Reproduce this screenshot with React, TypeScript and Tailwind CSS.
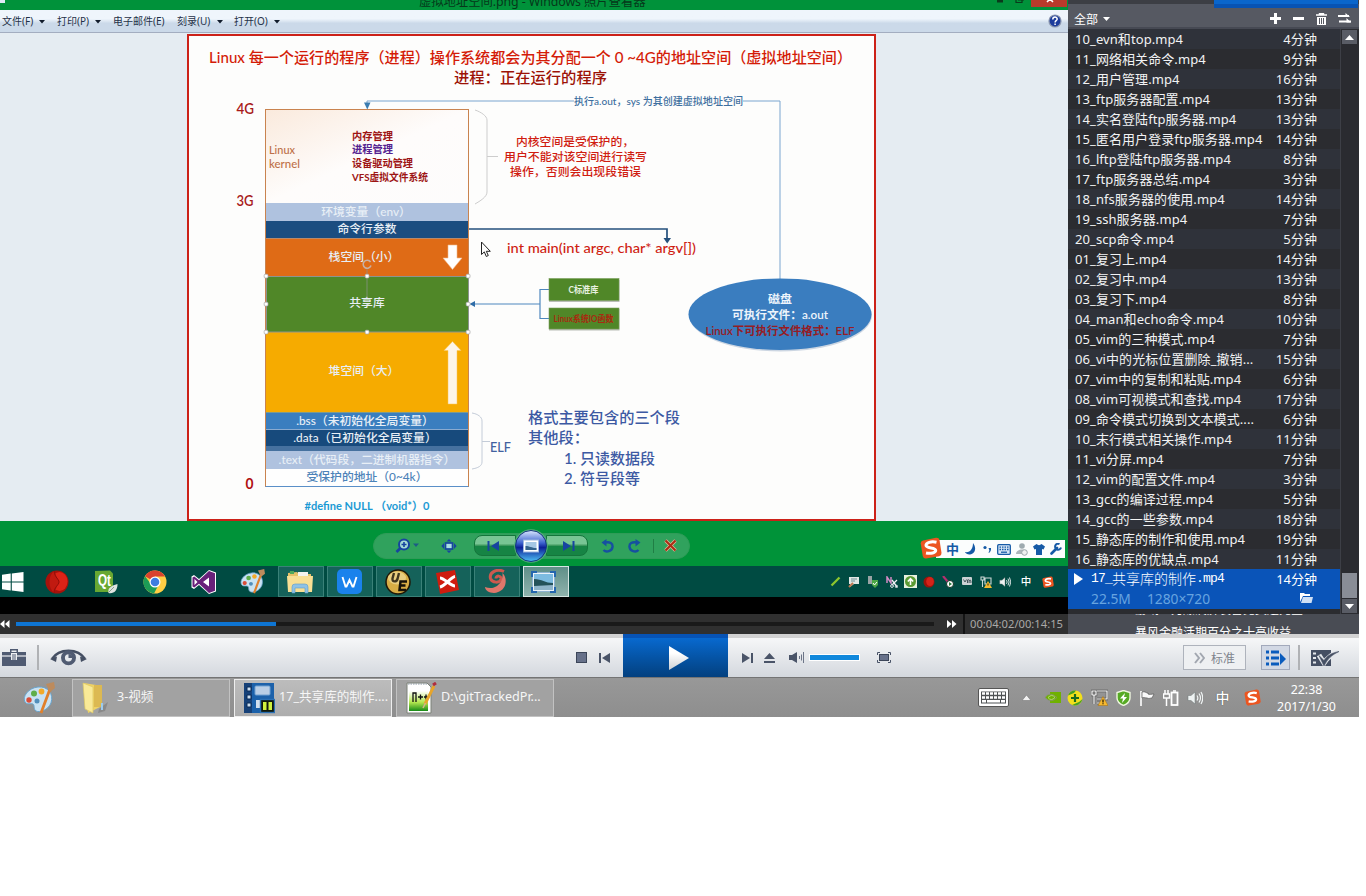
import React from "react";

type P = { children?: React.ReactNode };

const ui = "font-['Noto_Sans','Noto_Sans_CJK_SC',sans-serif]";

const playlist: [string, string][] = [
  ["10_evn和top.mp4", "4分钟"],
  ["11_网络相关命令.mp4", "9分钟"],
  ["12_用户管理.mp4", "16分钟"],
  ["13_ftp服务器配置.mp4", "13分钟"],
  ["14_实名登陆ftp服务器.mp4", "13分钟"],
  ["15_匿名用户登录ftp服务器.mp4", "14分钟"],
  ["16_lftp登陆ftp服务器.mp4", "8分钟"],
  ["17_ftp服务器总结.mp4", "3分钟"],
  ["18_nfs服务器的使用.mp4", "14分钟"],
  ["19_ssh服务器.mp4", "7分钟"],
  ["20_scp命令.mp4", "5分钟"],
  ["01_复习上.mp4", "14分钟"],
  ["02_复习中.mp4", "13分钟"],
  ["03_复习下.mp4", "8分钟"],
  ["04_man和echo命令.mp4", "10分钟"],
  ["05_vim的三种模式.mp4", "7分钟"],
  ["06_vi中的光标位置删除_撤销...", "15分钟"],
  ["07_vim中的复制和粘贴.mp4", "6分钟"],
  ["08_vim可视模式和查找.mp4", "17分钟"],
  ["09_命令模式切换到文本模式....", "6分钟"],
  ["10_末行模式相关操作.mp4", "11分钟"],
  ["11_vi分屏.mp4", "7分钟"],
  ["12_vim的配置文件.mp4", "3分钟"],
  ["13_gcc的编译过程.mp4", "5分钟"],
  ["14_gcc的一些参数.mp4", "18分钟"],
  ["15_静态库的制作和使用.mp4", "19分钟"],
  ["16_静态库的优缺点.mp4", "11分钟"],
];

/* ---------- photo viewer ---------- */

function ViewerTitle() {
  return (
    <div className="relative flex h-[10px] shrink-0 overflow-hidden bg-[#00923a]">
      <div className="h-[3px] w-[5px] bg-[#dfeaf5]" />
      <div className="ml-[414px] -mt-[8px] whitespace-nowrap text-[12.4px] leading-[19px] -tracking-[0.1px] text-[#06381a]">
        虚拟地址空间.png - Windows 照片查看器
      </div>
      <svg className="absolute right-[1px] top-0" width="76" height="8" viewBox="0 0 76 8">
        <rect x="6" y="0" width="6" height="2.5" fill="#0a3a1c" />
        <path d="M25 0v2.5h6v-3M27 0h6" fill="none" stroke="#0a3a1c" strokeWidth="1.2" />
        <rect x="40" width="36" height="7" fill="#b93a2b" />
        <path d="M56 2l3-3 3 3" stroke="#fff" strokeWidth="1.6" fill="none" />
      </svg>
    </div>
  );
}

function MenuCaret() {
  return (
    <svg width="6" height="4" viewBox="0 0 6 4">
      <path d="M0 0h6L3 3.6z" fill="#111c2c" />
    </svg>
  );
}

function ViewerMenu() {
  return (
    <div className="flex h-[23px] shrink-0 items-center border-b border-[#a3adc0] bg-linear-to-b from-[#eff5fc] from-40% to-[#cbd9e9] to-60% pl-[2px] pt-px text-[10px] text-[#1f3148]">
      <span className="w-[37px]">文件(F)</span>
      <MenuCaret />
      <span className="ml-[12px] w-[38px]">打印(P)</span>
      <MenuCaret />
      <span className="ml-[12px] w-[64px] whitespace-nowrap">电子邮件(E)</span>
      <span className="w-[40px]">刻录(U)</span>
      <MenuCaret />
      <span className="ml-[11px] w-[40px]">打开(O)</span>
      <MenuCaret />
      <svg className="ml-auto mr-[6px] -mt-px" width="14" height="14" viewBox="0 0 14 14">
        <circle cx="7" cy="7" r="6.6" fill="#8b97b0" />
        <circle cx="7" cy="7" r="5.4" fill="#1c3c9c" />
        <path d="M4.8 5.4c0-3 4.4-3 4.4-.3 0 1.6-2.1 1.5-2.1 3.3M7.1 9.6v1.3" stroke="#fff" strokeWidth="1.5" fill="none" />
      </svg>
    </div>
  );
}

type LabelProps = { x: number; y: number; w: number; s: number; c: string; b?: number; children: string };
function Label({ x, y, w, s, c, b = 500, children }: LabelProps) {
  return (
    <text x={x} y={y} textLength={w} lengthAdjust="spacingAndGlyphs" fontSize={s} fill={c} fontWeight={b} xmlSpace="preserve">
      {children}
    </text>
  );
}

function MemoryStack() {
  return (
    <div className="absolute left-[76px] top-[73px] flex w-[204px] flex-col border border-[#c9834f] border-b-[#5a8fc8] text-center text-[11.8px] font-medium text-[#e8eff6]">
      <div className="h-[93px] bg-linear-to-br from-[#faeadd] via-[#fefcfb] via-50% to-[#fdfcfc]" />
      <div className="h-[18px] bg-[#afc2df] pr-[2px] leading-[18px]">环境变量（env）</div>
      <div className="h-[17px] bg-[#1b4d80] leading-[16px]">命令行参数</div>
      <div className="h-[38px] border-t border-[#b8896b] bg-[#df6b16] pr-[6px] leading-[36px]">栈空间（小）</div>
      <div className="h-[56px] bg-[#508728] leading-[54px]">共享库</div>
      <div className="h-[80px] bg-[#f6ab00] pr-[6px] leading-[78px]">堆空间（大）</div>
      <div className="h-[17px] border-t border-[#7c9a90] bg-[#3a7ebf] pr-[4px] leading-[16px]">.bss（未初始化全局变量）</div>
      <div className="h-[17px] border-t border-[#8aabd0] bg-[#174a7c] pr-[4px] leading-[15px]">.data（已初始化全局变量）</div>
      <div className="h-[5px] bg-[#46719f]" />
      <div className="h-[18px] whitespace-nowrap bg-[#afc2df] leading-[18px]">.text（代码段，二进制机器指令）</div>
      <div className="h-[17px] bg-[#fefefe] leading-[16px] text-[#4c82b8]">受保护的地址（0~4k）</div>
    </div>
  );
}

function Diagram() {
  const handles: [number, number][] = [
    [266, 276], [367, 276], [468, 276], [266, 304], [468, 304], [266, 332], [367, 332], [468, 332],
  ];
  return (
    <div className="relative ml-[187px] h-[487px] w-[689px] overflow-hidden border-2 border-[#cc2118] bg-[#fdfdfc] font-['Lato','Noto_Sans_CJK_SC',sans-serif]">
      <MemoryStack />
      <svg className="absolute left-0 top-0" width="685" height="483" viewBox="189 36 685 483">
        <Label x={209} y={63} w={643} s={15.2} c="#d41c08">Linux 每一个运行的程序（进程）操作系统都会为其分配一个 0 ~4G的地址空间（虚拟地址空间）</Label>
        <Label x={454} y={83} w={153} s={15.2} c="#9c1206">进程：正在运行的程序</Label>
        <Label x={236.5} y={114} w={17.5} s={14.5} c="#a81a1a" b={600}>4G</Label>
        <Label x={236.5} y={206} w={17} s={14.5} c="#a81a1a" b={600}>3G</Label>
        <Label x={245.5} y={489} w={8} s={14.5} c="#b01010" b={700}>0</Label>

        <path d="M367 104v-3h207M743 101h37v178" fill="none" stroke="#7aa5cf" />
        <path d="M364 102.500h6.500l-3.200 7z" fill="#3b7cb0" />
        <Label x={574} y={104.500} w={169} s={10.3} c="#3d6f9f">执行a.out，sys 为其创建虚拟地址空间</Label>

        <Label x={269} y={153.500} w={26} s={10.5} c="#bd7048">Linux</Label>
        <Label x={269} y={167.500} w={31} s={10.5} c="#bd7048">kernel</Label>
        <Label x={352} y={139.500} w={41} s={10.3} c="#9d1414" b={700}>内存管理</Label>
        <Label x={352} y={153} w={41} s={10.3} c="#542290" b={700}>进程管理</Label>
        <Label x={352} y={167} w={61} s={10.3} c="#9d1414" b={700}>设备驱动管理</Label>
        <Label x={352} y={180.500} w={76} s={10.3} c="#9d1414" b={700}>VFS虚拟文件系统</Label>

        <path d="M475 110c6 2 12 6 12 10v72c0 5-7 9-12 12M487 156.500h11" fill="none" stroke="#cdcdcd" />
        <Label x={516} y={145.500} w={118} s={11.8} c="#d01c10">内核空间是受保护的，</Label>
        <Label x={504} y={160.500} w={143} s={11.8} c="#d01c10">用户不能对该空间进行读写</Label>
        <Label x={510} y={176} w={131} s={11.8} c="#d01c10">操作，否则会出现段错误</Label>

        <path d="M469 229h198v10" fill="none" stroke="#24507c" strokeWidth="1.7" />
        <path d="M663.500 238h7.500l-3.800 5.500z" fill="#24507c" />
        <Label x={507} y={253} w={189} s={14} c="#cf1d12">int main(int argc, char* argv[])</Label>
        <path d="M481.500 242v12.500l2.800-2.600 2 4.600 2-1-2-4.200h4z" fill="#fdfdfc" stroke="#222" strokeWidth="1" />

        <path d="M549 289.500h-9v29h9M540 304h-68" fill="none" stroke="#4e87bd" strokeWidth="1.2" />
        <path d="M469.500 304l5.500-3v6z" fill="#2f6da8" />
        <rect x="549" y="280" width="70.500" height="22" fill="#b9bdb6" />
        <rect x="549" y="278.500" width="70" height="22" fill="#508728" stroke="#7a9f5c" strokeWidth=".6" />
        <Label x={568.500} y={292.500} w={30} s={9} c="#e8f1e0" b={700}>C标准库</Label>
        <rect x="549" y="309" width="70.500" height="21.500" fill="#b9bdb6" />
        <rect x="549" y="308" width="70" height="21" fill="#508728" stroke="#7a9f5c" strokeWidth=".6" />
        <Label x={553.500} y={321.500} w={60} s={8.800} c="#a82a10" b={700}>Linux系统IO函数</Label>

        <ellipse cx="780.500" cy="315.500" rx="91.500" ry="36" fill="#ccd6e2" />
        <ellipse cx="780" cy="314.200" rx="91.500" ry="35.800" fill="#3a7dbf" />
        <Label x={768} y={302.500} w={24} s={11.8} c="#edf4fb" b={700}>磁盘</Label>
        <Label x={732} y={319} w={96} s={11.8} c="#edf4fb" b={600}>可执行文件：a.out</Label>
        <Label x={705.500} y={334.500} w={149} s={11.8} c="#961c24" b={600}>Linux下可执行文件格式：ELF</Label>

        <g stroke="#8d938f" fill="none">
          <path d="M266.500 276.500h202v55.500h-202z" />
          <path d="M367 268v30" strokeWidth=".7" />
          <path d="M370.500 262a4 4 0 1 0 .5 3.500" stroke="#c9b0a4" strokeWidth="1.6" />
        </g>
        {handles.map(([x, y], i) => (
          <rect key={i} x={x - 1.8} y={y - 1.8} width="3.800" height="3.800" rx="1" fill="#fff" stroke="#a5a5a5" strokeWidth=".7" />
        ))}
        <path d="M448 245h9v13h5l-9.500 11.500-9.500-11.500h5z" fill="#fff" stroke="#f2b98a" strokeWidth=".6" />
        <path d="M452.500 341.500l8.500 9h-4v53.500h-9v-53.500h-4z" fill="#fdf5e8" stroke="#f8c55a" strokeWidth=".5" />

        <path d="M472 413c6 1 10 4 10 8v41c0 4-4 6-10 7M482 441.500h8" fill="none" stroke="#c4ccd8" />
        <Label x={490} y={451.500} w={21} s={13.5} c="#42619f">ELF</Label>
        <Label x={528} y={423} w={152} s={15.2} c="#3c59a3">格式主要包含的三个段</Label>
        <Label x={528} y={443} w={61} s={15.2} c="#3c59a3">其他段：</Label>
        <Label x={564} y={463.500} w={91} s={15.2} c="#3c59a3">1. 只读数据段</Label>
        <Label x={564} y={484} w={76} s={15.2} c="#3c59a3">2. 符号段等</Label>
        <Label x={304.500} y={509.500} w={125} s={11} c="#1b9ad4" b={700}>#define NULL （void*）0</Label>
      </svg>
    </div>
  );
}

function ViewerControls() {
  return (
    <div className="flex h-[45px] shrink-0 items-center bg-[#009339]">
      <div className="relative ml-[373px] mt-[4px] flex h-[26px] w-[317px] items-center rounded-full border border-[#2f9c58] bg-[#30a25d]">
        <svg className="ml-[20px]" width="26" height="16" viewBox="0 0 26 16">
          <circle cx="10" cy="6.500" r="5" fill="#a5dcd4" stroke="#1744a0" strokeWidth="2" />
          <path d="M7.500 6.500h5M10 4v5" stroke="#1744a0" strokeWidth="1.600" />
          <path d="M6.500 10L2.500 14" stroke="#1744a0" strokeWidth="2.600" />
          <path d="M19 5.500h6l-3 3.500z" fill="#1d5c86" />
        </svg>
        <svg className="ml-[21px]" width="16" height="14" viewBox="0 0 16 14">
          <rect x="4.500" y="4" width="7" height="6" fill="#a9dfe2" stroke="#1744a0" strokeWidth="1.700" />
          <path d="M3 4L.3 7 3 10zM13 4l2.700 3-2.700 3zM5.500 2.600L8 0l2.500 2.600zM5.500 11.400L8 14l2.500-2.600z" fill="#1744a0" />
        </svg>
        <div className="ml-[17px] flex h-[21px] w-[42px] items-center justify-center rounded-l-[8px] border border-[#14753b] bg-linear-to-b from-[#78c594] from-40% to-[#168444] to-55% pr-[4px]">
          <svg width="13" height="10" viewBox="0 0 13 10">
            <path d="M1.500 0v10" stroke="#1744a0" strokeWidth="2" />
            <path d="M12 0v10L4 5z" fill="#1744a0" />
          </svg>
        </div>
        <svg className="z-10 -mx-[2px] shrink-0" width="34" height="36" viewBox="0 0 34 36">
          <defs>
            <linearGradient id="orb" x1="0" x2="0" y1="0" y2="1">
              <stop offset="0" stopColor="#dbe8ff" />
              <stop offset=".4" stopColor="#3d63cf" />
              <stop offset=".55" stopColor="#0c1f98" />
              <stop offset="1" stopColor="#4ec0f4" />
            </linearGradient>
          </defs>
          <circle cx="17" cy="18" r="16.800" fill="#53ae78" />
          <circle cx="17" cy="18" r="15.500" fill="url(#orb)" stroke="#13387b" />
          <rect x="9.500" y="12" width="15" height="12" fill="#fff" stroke="#9bb7de" />
          <rect x="11.500" y="14" width="11" height="8" fill="#a5c8e4" />
          <path d="M11.500 22v-4c4 0 6 2 11 2v2z" fill="#33628a" />
        </svg>
        <div className="flex h-[21px] w-[42px] items-center justify-center rounded-r-[8px] border border-[#14753b] bg-linear-to-b from-[#78c594] from-40% to-[#168444] to-55%">
          <svg className="ml-[2px]" width="13" height="10" viewBox="0 0 13 10">
            <path d="M11.500 0v10" stroke="#1744a0" strokeWidth="2" />
            <path d="M1 0v10L9 5z" fill="#1744a0" />
          </svg>
        </div>
        <svg className="ml-[13px]" width="13" height="14" viewBox="0 0 13 14">
          <path d="M4 3.500c5-1 8 1 7.500 4.500-.5 4-6 6-9 3" fill="none" stroke="#1650a0" strokeWidth="2.400" />
          <path d="M5.500 0v7.500L.5 3.500z" fill="#1650a0" />
        </svg>
        <svg className="ml-[14px]" width="13" height="14" viewBox="0 0 13 14">
          <path d="M9 3.500C4 2.500 1 4.500 1.500 8c.5 4 6 6 9 3" fill="none" stroke="#1650a0" strokeWidth="2.400" />
          <path d="M7.500 0v7.500l5-4z" fill="#1650a0" />
        </svg>
        <div className="ml-[12px] h-[14px] w-px bg-[#207e45]" />
        <svg className="ml-[10px]" width="13" height="13" viewBox="0 0 13 13">
          <path d="M1.500 1.500l10 10M11.500 1.500l-10 10" stroke="#e2b59a" strokeWidth="3.400" />
          <path d="M1.500 1.500l10 10M11.500 1.500l-10 10" stroke="#aa2c14" strokeWidth="2" />
        </svg>
      </div>
      <div className="relative ml-auto mr-[3px] mt-[11px] flex h-[18px] w-[129px] items-center bg-[#fbfdfd] pl-[9px]">
        <div className="absolute -left-[16px] -top-[3px]">
          <SogouIcon size={22} />
        </div>
        <span className="ml-[1px] text-[13px] font-bold leading-none text-[#155aa6]">中</span>
        <svg className="ml-[6px]" width="11" height="12" viewBox="0 0 11 12">
          <path d="M8 0c4 5 2 11-3 11.500C2.500 11.700.8 10.500 0 9c5 1 8-3 8-9z" fill="#155aa6" />
        </svg>
        <svg className="ml-[7px]" width="9" height="9" viewBox="0 0 9 9">
          <circle cx="2" cy="2.500" r="1.600" fill="#155aa6" />
          <path d="M5.500 3h2.500c.3 2-.6 4-2 5l-.5-.7c.7-.7 1-1.500.8-2.300z" fill="#155aa6" />
        </svg>
        <svg className="ml-[5px]" width="14" height="11" viewBox="0 0 14 11">
          <rect x=".7" y=".7" width="12.600" height="9.600" rx="1" fill="#d4e4f4" stroke="#155aa6" strokeWidth="1.300" />
          <path d="M2.500 3.200h9M2.500 5.500h9" stroke="#155aa6" strokeWidth="1.300" strokeDasharray="1.500 1" />
          <path d="M4 8.200h6" stroke="#155aa6" strokeWidth="1.300" />
        </svg>
        <svg className="ml-[5px]" width="12" height="13" viewBox="0 0 12 13">
          <circle cx="6" cy="3" r="2.800" fill="#9eabb0" />
          <path d="M0 11c0-6 12-6 11 0z" fill="#adb6bb" />
          <circle cx="8.500" cy="9.500" r="2.800" fill="#eef0f0" stroke="#9aa5aa" />
        </svg>
        <svg className="ml-[5px]" width="12" height="12" viewBox="0 0 12 12">
          <path d="M3.500 1C5 2.500 7 2.500 8.500 1L12 3.500l-1.500 3L9 6v6H3V6l-1.500.5L0 3.500z" fill="#155aa6" />
        </svg>
        <svg className="ml-[5px]" width="12" height="12" viewBox="0 0 12 12">
          <path d="M1.500 10.500L7 5" stroke="#155aa6" strokeWidth="2.600" strokeLinecap="round" />
          <path d="M9.500 1A3 3 0 1 0 11 4.500" stroke="#155aa6" strokeWidth="2" fill="none" />
        </svg>
      </div>
    </div>
  );
}

function SogouIcon({ size }: { size: number }) {
  return (
    <svg width={size} height={size} viewBox="0 0 22 22">
      <path d="M3 3.500L16 .8q3-.3 3.500 2.200L21.500 16q.2 2.600-2.300 3.200L6 21.500q-2.500.2-3.200-2.300L.7 6.500Q.6 4 3 3.500z" fill="#ec5520" />
      <path d="M16.500 5.200C11 4 6 5.700 6 8.300c0 3.500 9.500 1.700 9.700 5 0 2.500-5 3.700-9.700 2.700" fill="none" stroke="#fff" strokeWidth="3" />
    </svg>
  );
}

function Palette({ w }: { w: number }) {
  return (
    <svg width={w} height={w} viewBox="0 0 32 32">
      <path d="M15 5C5 6-1 15 2 20c2 3 5 1 8 2 2 1 0 5 3 7 4 2 12-1 15-8 3-9-3-17-13-16z" fill="#c9e2f3" stroke="#6aa4cc" />
      <circle cx="11" cy="11.500" r="3" fill="#5fae49" />
      <circle cx="18.500" cy="9.500" r="2.900" fill="#f2aa2a" />
      <circle cx="6" cy="18" r="2.700" fill="#d94d39" />
      <circle cx="14" cy="19" r="2.500" fill="#528ebb" />
      <path d="M27 7L18 31" stroke="#e0802c" strokeWidth="2.800" />
      <path d="M23 2l8-2 1 6-5 4z" fill="#bd8b5d" />
    </svg>
  );
}

function TaskSlot({ children }: P) {
  return <div className="flex h-full w-[49px] items-center justify-center">{children}</div>;
}
function TaskButton({ children, active }: P & { active?: boolean }) {
  return (
    <div className={"mr-[3px] flex h-[31px] w-[46px] items-center justify-center border " + (active ? "border-[#d5e5e2] bg-linear-to-b from-[#5f8f88] to-[#8fb3ad] pr-[5px]" : "border-[#3a8178] bg-[#15625a] pr-[2px]")}>
      {children}
    </div>
  );
}
function TraySlot({ children }: P) {
  return <div className="flex h-full w-[18.8px] items-center justify-center">{children}</div>;
}

function InnerTaskbar() {
  return (
    <div className="flex h-[31px] shrink-0 items-center bg-[#004b42]">
      <div className="flex w-[32px] pl-[2px]">
        <svg width="22" height="20" viewBox="0 0 22 20">
          <path d="M0 2.800l8.700-1.200v7.900H0zM9.800 1.400L21.500 0v9.500H9.800zM0 10.500h8.700v7.900L0 17.200zM9.800 10.500h11.700V20L9.800 18.500z" fill="#fff" />
        </svg>
      </div>
      <TaskSlot>
        <svg width="24" height="24" viewBox="0 0 24 24">
          <circle cx="12" cy="12" r="11.500" fill="#a5120b" />
          <ellipse cx="14.500" cy="11.500" rx="8" ry="9.500" fill="#dd2317" />
          <path d="M9 1c-6 5-6 17 0 22 2-4 3-7 5-11C12 8 11 5 9 1z" fill="#c11a10" />
          <path d="M9 1c1 7 5 8 5 11S9 17 9 23" stroke="#8e0d08" fill="none" />
        </svg>
      </TaskSlot>
      <TaskSlot>
        <svg width="24" height="24" viewBox="0 0 24 24">
          <path d="M1 1l15-.5 3 3V22H1z" fill="#68a832" />
          <text x="4" y="16" fontSize="16" fontWeight="700" textLength="13" lengthAdjust="spacingAndGlyphs" fill="#fff" fontFamily="Liberation Sans">Qt</text>
          <path d="M23.500 14c-7 2-10 4-9 9 5 1 9-2 9-9z" fill="#dfe3e0" />
          <path d="M14 23l6-6" stroke="#8aa08c" />
        </svg>
      </TaskSlot>
      <TaskSlot>
        <svg width="24" height="24" viewBox="0 0 24 24">
          <circle cx="12" cy="12" r="11.500" fill="#ffce44" />
          <path d="M12 12L2 6.200A11.500 11.500 0 0 1 22 6.500H12z" fill="#d9432f" />
          <path d="M2 6.200A11.500 11.500 0 0 0 11 23.500l5-9.500H8z" fill="#1c9c56" />
          <circle cx="12" cy="12" r="5.500" fill="#fff" />
          <circle cx="12" cy="12" r="4.300" fill="#3d7de0" />
        </svg>
      </TaskSlot>
      <TaskSlot>
        <svg width="26" height="26" viewBox="0 0 26 26">
          <path d="M18 1l7 2.500v19L18 25 8 16l-5 4-2.500-1.500v-11L3 6l5 4z" fill="#fff" />
          <path d="M18 2l6 2.200v17.600L18 24 8 14.700 3.300 18.500 1.500 17.500v-9l1.800-1L8 11.300z" fill="#68217a" />
          <path d="M3.500 10v6l3-3zM18 8.500L12 13l6 4.500z" fill="#fff" />
        </svg>
      </TaskSlot>
      <TaskSlot>
        <Palette w={25} />
      </TaskSlot>
      <div className="w-px" />
      <TaskButton>
        <svg width="26" height="24" viewBox="0 0 26 24">
          <path d="M1 3l9-1 2 2h12v17H1z" fill="#e6c168" />
          <path d="M3 1h4v3H3z" fill="#4ea85c" />
          <path d="M11 2h10v4H11z" fill="#f3f3ee" />
          <path d="M0 6h26l-1 16H1z" fill="#f8df94" />
          <path d="M5 23v-6q0-3 3-3h10q3 0 3 3v6h-3v-5H8v5z" fill="#8fc2e6" stroke="#5c9ac9" strokeWidth=".6" />
        </svg>
      </TaskButton>
      <TaskButton>
        <svg width="25" height="25" viewBox="0 0 25 25">
          <rect width="25" height="25" rx="5" fill="#1a82ec" />
          <path d="M5.500 8l3 9.500h1l3-6.500 3 6.500h1l3-9.500" fill="none" stroke="#fff" strokeWidth="1.900" />
        </svg>
      </TaskButton>
      <TaskButton>
        <svg width="26" height="26" viewBox="0 0 26 26">
          <circle cx="13" cy="13" r="12" fill="#d8ad45" stroke="#1d1708" strokeWidth="1.500" />
          <ellipse cx="12" cy="9" rx="9" ry="6.500" fill="#efd891" opacity=".75" />
          <path d="M9 4L7.500 9.500c-.5 4 4 3.500 5 .5L14 4" fill="none" stroke="#42371f" strokeWidth="2.400" />
          <path d="M22 12.500h-6.500l-1 8.500H21M14 16.500h6.500" fill="none" stroke="#171208" strokeWidth="2.500" />
        </svg>
      </TaskButton>
      <TaskButton>
        <svg width="25" height="24" viewBox="0 0 25 24">
          <path d="M1 3l19-3 4 20-19 4z" fill="#cf1c0e" />
          <path d="M5 8c4 0 11 8 15 8M20 6.500C16 7 10 16 5 17" stroke="#fff" strokeWidth="3" fill="none" />
        </svg>
      </TaskButton>
      <TaskButton>
        <svg width="25" height="25" viewBox="0 0 25 25">
          <path d="M20 2.500C12-1 5 4 6.500 9.500 8 14 16 14.500 17 10c.5-3.500-5-4-5-.5" fill="none" stroke="#cd594e" strokeWidth="3" />
          <path d="M18.500 4c6 6 4 19-8.500 20-5 0-9-3-9-6 5 2 9 1 12-1 4-3 6-7 5.500-13z" fill="#df776b" />
        </svg>
      </TaskButton>
      <TaskButton active>
        <svg width="25" height="22" viewBox="0 0 25 22">
          <rect x="1.500" y="1.500" width="22" height="19" fill="#eaf2f8" stroke="#8db2cf" strokeWidth="1" />
          <rect x="3" y="3" width="19" height="16" fill="#7cbbe0" />
          <path d="M3 8c8 0 11 4 19 4v3H3z" fill="#24525b" />
          <path d="M3 15l19-1v5H3z" fill="#8fb4ca" />
          <path d="M1 6V1h5M19 1h5v5M24 16v5h-5M6 21H1v-5" stroke="#2466ae" strokeWidth="2" fill="none" />
        </svg>
      </TaskButton>
      <div className="ml-auto flex h-full pr-[10px]">
        <TraySlot><svg width="11" height="11" viewBox="0 0 11 11"><path d="M1.500 9.500l8-8" stroke="#8ec62e" strokeWidth="2.300" /></svg></TraySlot>
        <TraySlot><svg width="12" height="12" viewBox="0 0 12 12"><path d="M1 1h10v7H6l-4 3V8H1z" fill="#e0e6e4" /><path d="M3 3h6M3 5h4" stroke="#6e8e93" /><path d="M1 11l4-4" stroke="#bd7750" strokeWidth="2" /></svg></TraySlot>
        <TraySlot><svg width="12" height="12" viewBox="0 0 12 12"><path d="M1 0h4v8H1z" fill="#99a3a5" /><path d="M5 4h6v5l-3 3-3-3z" fill="#4ba646" /><path d="M6 7l1.500 2L10 6" stroke="#fff" fill="none" /></svg></TraySlot>
        <TraySlot><svg width="12" height="12" viewBox="0 0 12 12"><path d="M1 7V1l4 6V1" stroke="#d28bc5" strokeWidth="1.500" fill="none" /><path d="M6 4l5 7M11 4l-5 5" stroke="#eef0f4" strokeWidth="1.300" /><circle cx="6" cy="10" r="1.400" fill="none" stroke="#dce2e8" /><circle cx="10.500" cy="10.500" r="1.200" fill="none" stroke="#dce2e8" /></svg></TraySlot>
        <TraySlot><svg width="13" height="13" viewBox="0 0 13 13"><rect width="13" height="13" fill="#e8f2e0" /><circle cx="6.500" cy="6.500" r="5.500" fill="#5a9a33" /><path d="M6.500 10V4M3.800 6.500l2.700-2.800 2.700 2.800" stroke="#fff" strokeWidth="1.600" fill="none" /></svg></TraySlot>
        <TraySlot><svg width="12" height="12" viewBox="0 0 12 12"><circle cx="6" cy="6" r="5.500" fill="#9d130b" /><ellipse cx="7" cy="5.500" rx="3.800" ry="4.500" fill="#d3241a" /></svg></TraySlot>
        <TraySlot><svg width="12" height="12" viewBox="0 0 12 12"><path d="M1 0l5 6" stroke="#b32f6e" strokeWidth="2.200" /><circle cx="8" cy="8" r="3.500" fill="#fff" stroke="#132" /><path d="M7 6l3 2-3 2z" fill="#257b3b" /></svg></TraySlot>
        <TraySlot><svg width="12" height="11" viewBox="0 0 12 11"><rect x="1" y="1" width="10" height="8" rx="1" fill="#cbd2d4" /><path d="M2.500 3.500L4 6l1.500-2.500M6.500 7V4q1.300-1 1.600.5V7M8.100 4.500q1.800-1 1.800.5v2" stroke="#44565c" fill="none" /></svg></TraySlot>
        <TraySlot><svg width="12" height="12" viewBox="0 0 12 12"><path d="M1 1h3v3H1zM2.500 4v7M5 2h6v6H5z" fill="none" stroke="#cbd8d6" strokeWidth="1.100" /><path d="M8 5l4 7H4z" fill="#f4b92f" /><path d="M8 7.500v2" stroke="#332200" /></svg></TraySlot>
        <TraySlot><Speaker w={12} /></TraySlot>
        <div className="flex h-full w-[24px] items-center justify-center text-[10.5px] font-medium text-white">中</div>
        <div className="flex h-full w-[20px] items-center justify-center"><SogouIcon size={12} /></div>
      </div>
    </div>
  );
}

function Speaker({ w }: { w: number }) {
  return (
    <svg width={w} height={w} viewBox="0 0 16 16">
      <path d="M1 5.500h3L8 2v12l-4-3.500H1z" fill="#eef2f2" stroke="#6b7474" strokeWidth=".5" />
      <path d="M10 5.500q1.700 2.500 0 5M12 3.500q3 4.500 0 9M14 2q3.500 6 0 12" fill="none" stroke="#f1f5f5" strokeWidth="1.200" />
    </svg>
  );
}

function ProgressBar() {
  return (
    <div className="flex h-[20px] shrink-0 items-center bg-[#303030]">
      <svg width="10" height="8" viewBox="0 0 10 8"><path d="M4.500 0v8L0 4zM9.500 0v8L5 4z" fill="#fff" /></svg>
      <div className="ml-[6px] flex h-[4px] w-[918px] bg-[#1a1a1a]">
        <div className="h-full w-[260px] bg-[#0e75d3]" />
      </div>
      <svg className="ml-[13px]" width="10" height="8" viewBox="0 0 10 8"><path d="M0 0v8l4.500-4zM5 0v8l4.500-4z" fill="#fff" /></svg>
      <div className="ml-[6px] h-full w-[2px] bg-[#141414]" />
      <span className="ml-[5px] whitespace-nowrap text-[11.2px] text-[#aaa9a7]">00:04:02/00:14:15</span>
    </div>
  );
}

/* ---------- playlist sidebar ---------- */

function Sidebar() {
  return (
    <aside className="flex h-[634px] w-[291px] shrink-0 flex-col overflow-hidden bg-[#2b2c30]">
      <div className="relative h-[4px] shrink-0 bg-[#3c3e44]">
        <div className="absolute right-[1px] top-0 h-[8px] w-[144px] border-b-4 border-[#0853b3] bg-[#0a66cc]" />
      </div>
      <div className="flex h-[25px] shrink-0 items-center border-b-2 border-[#464953] bg-[#565962] pl-[6px] pt-[6px] text-[12px] text-white">
        <span className="mt-[2px]">全部</span>
        <svg className="ml-[5px] mt-[1px]" width="7" height="4" viewBox="0 0 7 4"><path d="M0 0h7L3.500 4z" fill="#fff" /></svg>
        <svg className="ml-auto" width="11" height="11" viewBox="0 0 11 11"><path d="M5.500 0v11M0 5.500h11" stroke="#fff" strokeWidth="3" /></svg>
        <div className="ml-[12px] h-[3px] w-[11px] bg-white" />
        <svg className="ml-[12px]" width="11" height="12" viewBox="0 0 11 12">
          <path d="M0 2h11M3.500 1.500V.6h4v.9" stroke="#fff" strokeWidth="1.400" fill="none" />
          <path d="M1 4h9v8H1z" fill="#fff" />
          <path d="M3.500 5v6M5.500 5v6M7.500 5v6" stroke="#565962" />
        </svg>
        <svg className="ml-[11px] mr-[8px]" width="13" height="11" viewBox="0 0 13 11">
          <path d="M0 3h11M1 8.500h12" stroke="#fff" strokeWidth="1.800" />
          <path d="M7.500 0l4.500 3.900H7.500zM8.500 5l4.500 4.400H8.500z" fill="#fff" />
        </svg>
      </div>
      <div className="flex h-[585px] shrink-0">
        <div className="w-[272px]">
          {playlist.map(([name, time], i) => (
            <div key={name} className={"flex h-[20px] items-center justify-between pl-[7px] pr-[23px] pt-px text-[13px] tracking-[0.08px] whitespace-nowrap text-[#f2f3f4] " + (i % 2 ? "bg-[#2b2c30]" : "bg-[#2f323a]")}>
              <span>{name}</span>
              <span>{time}</span>
            </div>
          ))}
          <div className="h-[40px] bg-[#0a54b8] pl-[6px] pr-[23px] text-[13px] text-white">
            <div className="flex h-[20px] items-center justify-between">
              <div className="flex items-center whitespace-nowrap">
                <svg className="mr-[8px]" width="9" height="12" viewBox="0 0 9 12"><path d="M0 0l9 6-9 6z" fill="#fff" /></svg>
                <span className="font-['Liberation_Mono'] text-[13px] -tracking-[0.8px]">17_</span>
                <span className="text-[14px] font-light leading-[20px]">共享库的制作</span>
                <span className="font-['Liberation_Mono'] text-[13px] -tracking-[0.8px]">.mp4</span>
              </div>
              <span className="pt-px">14分钟</span>
            </div>
            <div className="flex h-[20px] items-center pl-[17px] text-[13.8px] text-[#67a4e0]">
              <span>22.5M</span>
              <span className="ml-[16px]">1280×720</span>
              <svg className="ml-auto mr-[4px] -mt-[3px]" width="13" height="10" viewBox="0 0 13 10">
                <path d="M0 9V0h4l1 1h5v2H3z" fill="#fff" /><path d="M3 4h10l-1.500 6H1z" fill="#cfe0f5" />
              </svg>
            </div>
          </div>
        </div>
        <div className="flex w-[18px] flex-col items-center border-l border-[#3d3f46] bg-[#2a2b30] pt-[1px]">
          <div className="flex h-[14px] w-[15px] items-center justify-center bg-[#595c65]">
            <svg width="9" height="5" viewBox="0 0 9 5"><path d="M0 5h9L4.500 0z" fill="#fff" /></svg>
          </div>
          <div className="mt-[529px] h-[25px] w-[15px] bg-[#898d96]" />
          <div className="mt-[1px] flex h-[14px] w-[15px] items-center justify-center bg-[#595c65]">
            <svg width="9" height="5" viewBox="0 0 9 5"><path d="M0 0h9L4.500 5z" fill="#fff" /></svg>
          </div>
        </div>
      </div>
      <div className="flex h-[20px] shrink-0 flex-col overflow-hidden bg-[#494c54] pl-[67px] text-[12px] text-white">
        <div className="h-[2px] shrink-0 overflow-hidden">
          <div className="-mt-[12px] whitespace-nowrap leading-[15px]">游戏一刀爆满屏装备免费送元宝</div>
        </div>
        <div className="mt-[8px] h-[10px] shrink-0 overflow-hidden">
          <div className="whitespace-nowrap leading-[18px]">暴风金融活期百分之十高收益</div>
        </div>
      </div>
    </aside>
  );
}

/* ---------- player controls ---------- */

function ControlBar() {
  return (
    <div className="flex h-[43px] items-center border-t-4 border-[#d2d2d2] bg-linear-to-b from-[#f6f7f8] to-[#d4d8de]">
      <svg className="ml-[2px]" width="24" height="19" viewBox="0 0 24 19">
        <path d="M8 4V1h8v3M0 4h24v14H0z" fill="#505b72" />
        <path d="M9.500 4V2.500h5V4z" fill="#eef0f3" />
        <path d="M0 8h24" stroke="#eef0f3" strokeWidth="1.200" />
        <rect x="9" y="5" width="6" height="7" fill="#eef0f3" />
        <path d="M10 7h4M10 9h4M10 11h4" stroke="#505b72" />
      </svg>
      <div className="ml-[11px] h-[25px] w-[2px] bg-[#b0b2b5]" />
      <svg className="ml-[11px]" width="37" height="17" viewBox="0 0 37 17">
        <path d="M2 10C9-1 28-1 35 10" fill="none" stroke="#454f63" strokeWidth="2.600" />
        <path d="M0 10l6 3 1-5.500zM37 10l-6 3-1-5.500z" fill="#454f63" />
        <circle cx="18.500" cy="8.800" r="7.500" fill="#505b72" />
        <circle cx="18.500" cy="8.800" r="3.600" fill="#e6e9ed" />
        <path d="M18.500 9V5a4 4 0 0 1 4 4z" fill="#505b72" />
      </svg>
      <div className="ml-[489px] h-[11px] w-[11px] border border-[#3c4659] bg-[#67718a]" />
      <svg className="ml-[12px]" width="11" height="10" viewBox="0 0 11 10"><path d="M1 0v10" stroke="#4a5468" strokeWidth="2" /><path d="M11 0v10L3 5z" fill="#4a5468" /></svg>
      <div className="-mt-[4px] ml-[13px] flex h-[43px] w-[105px] items-center justify-center border-t-4 border-[#0753b5] bg-linear-to-b from-[#0869cf] to-[#03407f] pl-[7px]">
        <svg width="20" height="24" viewBox="0 0 20 24">
          <defs><linearGradient id="pl" x1="0" x2="0" y1="0" y2="1"><stop offset=".3" stopColor="#fff" /><stop offset="1" stopColor="#cdd0d4" /></linearGradient></defs>
          <path d="M0 0l20 12L0 24z" fill="url(#pl)" />
        </svg>
      </div>
      <svg className="ml-[14px]" width="11" height="10" viewBox="0 0 11 10"><path d="M10 0v10" stroke="#4a5468" strokeWidth="2" /><path d="M0 0v10l8-5z" fill="#4a5468" /></svg>
      <svg className="ml-[11px]" width="11" height="10" viewBox="0 0 11 10"><path d="M5.500 0L11 6H0zM0 8h11v2H0z" fill="#4a5468" /></svg>
      <svg className="ml-[14px]" width="16" height="11" viewBox="0 0 16 11">
        <path d="M0 3h3l5-3v11L3 8H0z" fill="#4a5468" />
        <path d="M10.500 4v3M12.500 2.500v6M14.500 0v11" stroke="#6c7588" strokeWidth="1" />
      </svg>
      <div className="ml-[4px] h-[7px] w-[51px] border border-white bg-[#1088dc]" />
      <svg className="ml-[17px]" width="14" height="11" viewBox="0 0 14 11">
        <path d="M.5 3V.5H3M11 .5h2.500V3M13.500 8v2.500H11M3 10.500H.5V8" fill="none" stroke="#4a5468" />
        <rect x="2.500" y="2.500" width="9" height="6" fill="#67718a" stroke="#3c4659" />
      </svg>
      <div className="ml-auto flex h-[25px] w-[63px] items-center justify-center border border-[#aeb3bc] bg-[#eef0f2] text-[12px] text-[#7f848d]">
        <svg className="mr-[6px]" width="11" height="12" viewBox="0 0 11 12"><path d="M1 1l4 5-4 5M6 1l4 5-4 5" fill="none" stroke="#a2a7b0" strokeWidth="2" /></svg>
        <span className="pt-[2px]">标准</span>
      </div>
      <div className="ml-[15px] flex h-[25px] w-[29px] items-center justify-center border border-[#a2a9bb] bg-[#d2d8e4]">
        <svg width="20" height="16" viewBox="0 0 20 16">
          <path d="M0 2h3M0 8h3M0 14h3M5 2h8M5 8h8M5 14h8" stroke="#0a5bbd" strokeWidth="2.800" />
          <path d="M14 3l6 6-6 6z" fill="#0a5bbd" />
        </svg>
      </div>
      <div className="ml-[8px] h-[25px] w-[2px] bg-[#b0b2b5]" />
      <svg className="ml-[11px] mr-[20px]" width="28" height="18" viewBox="0 0 28 18">
        <path d="M0 1h20v16H0z" fill="#454f63" />
        <path d="M2 4.500h3M2 9h3M2 13.500h3" stroke="#e4e7eb" strokeWidth="2" />
        <path d="M8 6l5 8C17 8 21 5 27 3" fill="none" stroke="#e4e7eb" strokeWidth="5" />
        <path d="M8 6.500L13 17C17 9 21 6 28 2.500 20 4 16 7 13 11.500z" fill="#454f63" stroke="#454f63" strokeWidth=".6" />
      </svg>
    </div>
  );
}

/* ---------- desktop taskbar ---------- */

function AppButton({ children, label, active }: P & { label: string; active?: boolean }) {
  return (
    <div className={"mr-[4px] flex h-[38px] w-[158px] items-center border text-[12.6px] text-[#f6f6f6] " + (active ? "border-[#eeeeee] bg-linear-to-b from-[#bcbcbc] to-[#adadad]" : "border-[#c2c2c2] bg-[#a2a2a2]")}>
      <div className="flex w-[44px] items-center pl-[9px]">{children}</div>
      <span className="whitespace-nowrap">{label}</span>
    </div>
  );
}

function Tray({ children }: P) {
  return <div className="flex h-full w-[24px] items-center justify-center">{children}</div>;
}

function DesktopTaskbar() {
  return (
    <div className="flex h-[40px] items-center border-t border-[#747474] bg-linear-to-b from-[#989898] to-[#8e8e8e]">
      <div className="flex w-[72px] pl-[23px]"><Palette w={32} /></div>
      <AppButton label="3-视频">
        <svg width="28" height="32" viewBox="0 0 28 32">
          <path d="M17 27l9-7-3 9-7 2z" fill="#6f6f6f" opacity=".5" />
          <path d="M2 1l18 3v20L6 31z" fill="#efd265" />
          <path d="M12 3h8v22h-8z" fill="#dcb952" />
          <path d="M1 1l10 4v26L3 27z" fill="#f9e997" stroke="#ddc763" strokeWidth=".7" />
          <path d="M19 21h2v7h-2z" fill="#9ccbed" />
        </svg>
      </AppButton>
      <AppButton label="17_共享库的制作...." active>
        <svg width="31" height="32" viewBox="0 0 31 32">
          <path d="M0 1h30v30H0z" fill="#1c61aa" />
          <path d="M0 1h8v30H0z" fill="#164178" />
          <path d="M3 5h4v4H3zM3 13h4v4H3zM3 21h4v4H3z" fill="#cbdef0" stroke="#0b2a55" />
          <rect x="11" y="4" width="15" height="9" rx="1" fill="#b9cee6" stroke="#70a1d1" />
          <path d="M12 18h14v8H12z" fill="#d2e0ef" />
          <rect x="16.500" y="17.500" width="14" height="13" fill="#11190c" stroke="#2b70b5" strokeWidth="1.400" />
          <path d="M19 20h3.500v8H19zM24.500 20H28v8h-3.500z" fill="#cff23d" />
        </svg>
      </AppButton>
      <AppButton label="D:\gitTrackedPr...">
        <svg width="32" height="32" viewBox="0 0 32 32">
          <defs><linearGradient id="np" x1="0" x2="0" y1="0" y2="1"><stop offset=".2" stopColor="#fff" /><stop offset=".65" stopColor="#b5e750" /><stop offset="1" stopColor="#168a16" /></linearGradient></defs>
          <path d="M1 1h20l4 4v26H1z" fill="#fff" stroke="#7c8278" />
          <path d="M3 4h19v25H3z" fill="url(#np)" />
          <path d="M2 2h19" stroke="#8b97a3" strokeDasharray="1.500 1" />
          <path d="M7 20v-9h3v9M12 15h5M14.500 12.500v5M18 15h4M20 12.500v5" stroke="#111" strokeWidth="1.300" fill="none" />
          <path d="M28 4L19 22" stroke="#e7a52c" strokeWidth="3" />
          <path d="M19.500 21L17 26" stroke="#d4b48a" strokeWidth="1.500" />
          <path d="M27 3l3-2" stroke="#b02d3e" strokeWidth="3" />
        </svg>
      </AppButton>
      <svg className="ml-auto" width="31" height="19" viewBox="0 0 31 19">
        <rect x=".5" y=".5" width="30" height="18" rx="1.500" fill="#fff" stroke="#555" />
        <rect x="3" y="3.500" width="25" height="12" fill="#4f5254" />
        <path d="M4 5.500h23M4 9.500h23" stroke="#fff" strokeWidth="2.600" strokeDasharray="3 1" />
        <path d="M4 13.300h4M9 13.300h13M23 13.300h4" stroke="#fff" strokeWidth="2.600" />
      </svg>
      <div className="flex w-[34px] justify-center"><svg width="9" height="6" viewBox="0 0 9 6"><path d="M4.500 0L9 5.500H0z" fill="#f1f1f1" stroke="#777" strokeWidth=".6" /></svg></div>
      <div className="flex w-[20px] justify-center">
        <svg width="16" height="11" viewBox="0 0 16 11">
          <path d="M5 0h11v11H5z" fill="#6fb100" />
          <path d="M0 5.500Q5-1 12 5.500 6 12 0 5.500z" fill="#6fb100" stroke="#8a8f80" strokeWidth=".7" />
          <path d="M3 5.500q4-4 7 0-4 4-7 0z" fill="none" stroke="#b8d982" strokeWidth=".9" />
        </svg>
      </div>
      <Tray><svg width="16" height="16" viewBox="0 0 16 16"><circle cx="8" cy="8" r="7.500" fill="#f3e01b" /><path d="M1 5.500A8 8 0 0 1 9 .5L7 3zM5 15A8 8 0 0 0 15.500 9L12 12z" fill="#45a126" /><path d="M8 4v8M4 8h8" stroke="#1c6b20" strokeWidth="2.200" /></svg></Tray>
      <Tray>
        <svg width="17" height="17" viewBox="0 0 17 17">
          <path d="M1 2h4v4H1zM3 6v9M6 2h10v8H6M6 14h4" stroke="#4d4d4d" strokeWidth="2.400" fill="none" />
          <path d="M1 2h4v4H1zM3 6v9M6 2h10v8H6M6 14h4" stroke="#fff" strokeWidth="1.200" fill="none" />
          <path d="M12 7.500l5 9H7z" fill="#f7b92f" stroke="#a36c12" strokeWidth=".5" /><path d="M12 10.500v3M12 14.300v1" stroke="#2d2004" strokeWidth="1.300" />
        </svg>
      </Tray>
      <Tray><svg width="15" height="16" viewBox="0 0 15 16"><path d="M7.500.5l6.500 2V8c0 4-3 6-6.500 7.500C4 14 1 12 1 8V2.500z" fill="#56aa24" stroke="#eef6df" strokeWidth="1.400" /><path d="M9 3L4 8.500h3L6 13l5-6H8z" fill="#fff" /></svg></Tray>
      <Tray><svg width="16" height="16" viewBox="0 0 16 16"><path d="M2 1v15" stroke="#fff" strokeWidth="1.600" /><path d="M3 2c3-1 4 1 6 1v1c2 1 3 0 6 0l-2 4c-2 0-3 1-5 0C6 8 5 7 3 8z" fill="#fafafa" stroke="#585858" strokeWidth=".7" /></svg></Tray>
      <Tray>
        <svg width="16" height="16" viewBox="0 0 16 16">
          <path d="M2 0v4M5 0v4M.5 4h6v4h-6zM3.500 8v8" stroke="#fff" strokeWidth="1.500" fill="none" />
          <rect x="8.500" y="2.500" width="6" height="12.500" fill="#9a9a9a" stroke="#fff" strokeWidth="1.800" /><path d="M10 1h3" stroke="#fff" strokeWidth="1.500" />
        </svg>
      </Tray>
      <Tray><Speaker w={16} /></Tray>
      <div className="flex w-[31px] justify-center text-[14px] font-medium text-white [text-shadow:0_0_1px_#333]">中</div>
      <div className="flex w-[28px] justify-center"><SogouIcon size={17} /></div>
      <div className="ml-[3px] mr-[15px] flex w-[75px] flex-col text-center text-[12.4px] leading-[17px] text-white">
        <span>22:38</span>
        <span>2017/1/30</span>
      </div>
    </div>
  );
}

export default function App() {
  return (
    <div className={"h-[896px] w-[1366px] overflow-hidden bg-white " + ui}>
      <div className="flex w-[1359px] flex-col">
        <div className="flex h-[634px]">
          <main className="flex w-[1068px] shrink-0 flex-col bg-black">
            <ViewerTitle />
            <ViewerMenu />
            <div className="h-[488px] shrink-0 bg-[#e5ecf2] pt-px"><Diagram /></div>
            <ViewerControls />
            <InnerTaskbar />
            <div className="h-[17px] shrink-0 bg-black" />
            <ProgressBar />
          </main>
          <Sidebar />
        </div>
        <ControlBar />
        <DesktopTaskbar />
      </div>
    </div>
  );
}
